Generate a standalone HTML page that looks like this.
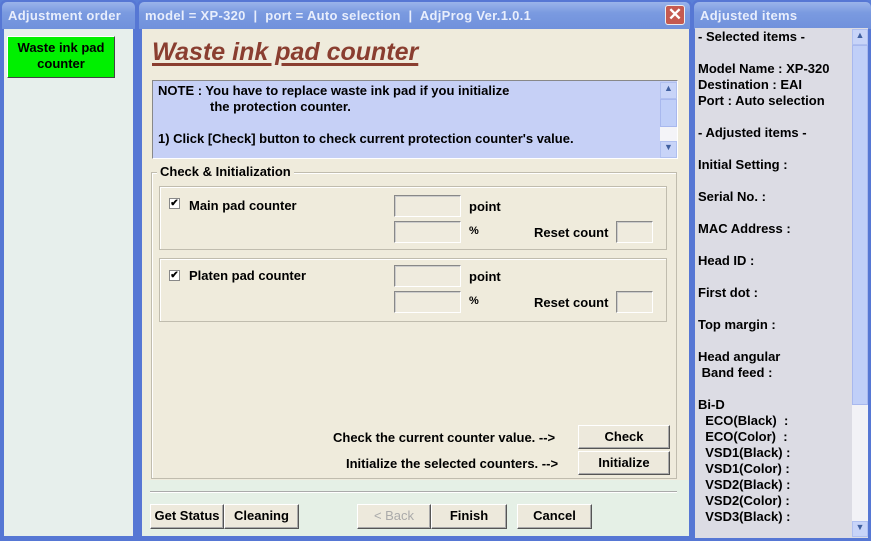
<!DOCTYPE html>
<html><head><meta charset="utf-8"><style>
*{margin:0;padding:0;box-sizing:border-box}
body{width:871px;height:541px;overflow:hidden;background:#5a7fd8;font-family:"Liberation Sans",Arial,sans-serif;font-size:13px;position:relative}
.a{position:absolute}
.tb{background:linear-gradient(#9ab4ea,#7a9ae0 40%,#7091dc);color:#e8eefc;font-weight:bold;font-size:13px;padding:6px 0 0 6px;height:28px;letter-spacing:.3px}
.b{font-weight:bold;color:#000}
.btn{position:absolute;background:#ede9dc;border:1px solid;border-color:#fff #555 #555 #fff;box-shadow:inset -1px -1px 0 #aaa;font-weight:bold;text-align:center;font-size:13px;line-height:22px}
.in{position:absolute;border:1px solid;border-color:#888 #fff #fff #888;background:#efebde;box-shadow:inset 1px 1px 0 #ccc}
.grp{position:absolute;border:1px solid #c0bcae;box-shadow:1px 1px 0 #fff inset}
.cb{position:absolute;width:11px;height:11px;border:1px solid #888;background:#fff;font-size:10px;line-height:9px;text-align:center;font-weight:bold}
</style></head><body>
<!-- left -->
<div class="a" style="left:0;top:0;width:137px;height:541px;background:#5677d4;border-radius:6px 6px 0 0"></div>
<div class="a tb" style="left:2px;top:2px;width:133px;height:27px;border-radius:5px 5px 0 0">Adjustment order</div>
<div class="a" style="left:4px;top:29px;width:129px;height:507px;background:#e7efec"></div>
<div class="a b" style="left:7px;top:36px;width:108px;height:42px;background:#00f000;border:1px solid;border-color:#fff #444 #444 #fff;text-align:center;font-size:13px;line-height:16px;padding-top:3px">Waste ink pad<br>counter</div>
<!-- middle -->
<div class="a" style="left:137px;top:0;width:555px;height:541px;background:#5677d4;border-radius:6px 6px 0 0"></div>
<div class="a tb" style="left:139px;top:2px;width:551px;height:27px;border-radius:5px 5px 0 0">model = XP-320 &nbsp;|&nbsp; port = Auto selection &nbsp;|&nbsp; AdjProg Ver.1.0.1</div>
<div class="a" style="left:665px;top:5px;width:20px;height:20px;background:#c55a50;border:1px solid #eee;border-radius:3px;color:#fff;font-size:17px;line-height:17px;text-align:center;font-weight:bold">✕</div>
<div class="a" style="left:142px;top:29px;width:547px;height:507px;background:#e5f0e6"></div>
<div class="a" style="left:142px;top:29px;width:547px;height:451px;background:#efebdc"></div>
<div class="a" style="left:152px;top:38px;font-size:25px;font-style:italic;font-weight:bold;color:#8a3e30;text-decoration:underline;text-decoration-thickness:3px;text-underline-offset:3px">Waste ink pad counter</div>
<div class="a" style="left:152px;top:80px;width:526px;height:79px;background:#c6d0f6;border:1px solid;border-color:#888 #fff #fff #888"></div>
<div class="a b" style="left:158px;top:83px;line-height:16px;font-size:13px">NOTE : You have to replace waste ink pad if you initialize<br><span style="padding-left:52px">the protection counter.</span><br><br>1) Click [Check] button to check current protection counter's value.</div>
<div class="a" style="left:660px;top:82px;width:17px;height:76px;background:#f4f4f8"></div>
<div class="a" style="left:660px;top:82px;width:17px;height:17px;background:#c8d4f8;border:1px solid #b0c0f0;font-size:9px;text-align:center;color:#4060a0">▲</div>
<div class="a" style="left:660px;top:99px;width:17px;height:28px;background:#c0cff8;border:1px solid #a8b8ee"></div>
<div class="a" style="left:660px;top:141px;width:17px;height:17px;background:#c8d4f8;border:1px solid #b0c0f0;font-size:9px;text-align:center;color:#4060a0">▼</div>
<div class="grp" style="left:151px;top:172px;width:526px;height:307px"></div>
<div class="a b" style="left:157px;top:164px;background:#efebdc;padding:0 3px">Check &amp; Initialization</div>
<div class="grp" style="left:159px;top:186px;width:508px;height:64px"></div>
<div class="cb" style="left:169px;top:198px">✔</div>
<div class="a b" style="left:189px;top:198px">Main pad counter</div>
<div class="in" style="left:394px;top:195px;width:67px;height:22px"></div>
<div class="in" style="left:394px;top:221px;width:67px;height:22px"></div>
<div class="a b" style="left:469px;top:199px">point</div>
<div class="a b" style="left:469px;top:225px;font-size:11px">%</div>
<div class="a b" style="left:534px;top:225px">Reset count</div>
<div class="in" style="left:616px;top:221px;width:37px;height:22px"></div>
<div class="grp" style="left:159px;top:258px;width:508px;height:64px"></div>
<div class="cb" style="left:169px;top:270px">✔</div>
<div class="a b" style="left:189px;top:268px">Platen pad counter</div>
<div class="in" style="left:394px;top:265px;width:67px;height:22px"></div>
<div class="in" style="left:394px;top:291px;width:67px;height:22px"></div>
<div class="a b" style="left:469px;top:269px">point</div>
<div class="a b" style="left:469px;top:295px;font-size:11px">%</div>
<div class="a b" style="left:534px;top:295px">Reset count</div>
<div class="in" style="left:616px;top:291px;width:37px;height:22px"></div>
<div class="a b" style="left:333px;top:430px">Check the current counter value. --&gt;</div>
<div class="a b" style="left:346px;top:456px">Initialize the selected counters. --&gt;</div>
<div class="btn" style="left:578px;top:425px;width:92px;height:24px">Check</div>
<div class="btn" style="left:578px;top:451px;width:92px;height:24px">Initialize</div>
<div class="a" style="left:150px;top:491px;width:527px;height:2px;border-top:1px solid #aaa;border-bottom:1px solid #fff"></div>
<div class="btn" style="left:150px;top:504px;width:74px;height:25px">Get Status</div>
<div class="btn" style="left:224px;top:504px;width:75px;height:25px">Cleaning</div>
<div class="btn" style="left:357px;top:504px;width:74px;height:25px;color:#aaa;font-weight:normal">&lt; Back</div>
<div class="btn" style="left:431px;top:504px;width:76px;height:25px">Finish</div>
<div class="btn" style="left:517px;top:504px;width:75px;height:25px">Cancel</div>
<!-- right -->
<div class="a" style="left:692px;top:0;width:179px;height:541px;background:#5677d4;border-radius:6px 6px 0 0"></div>
<div class="a tb" style="left:694px;top:2px;width:177px;height:27px;border-radius:5px 5px 0 0">Adjusted items</div>
<div class="a" style="left:695px;top:28px;width:173px;height:510px;background:#dcdce4"></div>
<div class="a b" style="left:698px;top:29px;line-height:16px;font-size:13px;white-space:pre">- Selected items -

Model Name : XP-320
Destination : EAI
Port : Auto selection

- Adjusted items -

Initial Setting :

Serial No. :

MAC Address :

Head ID :

First dot :

Top margin :

Head angular
 Band feed :

Bi-D
  ECO(Black)  :
  ECO(Color)  :
  VSD1(Black) :
  VSD1(Color) :
  VSD2(Black) :
  VSD2(Color) :
  VSD3(Black) :</div>
<div class="a" style="left:852px;top:29px;width:16px;height:508px;background:#f2f2f6"></div>
<div class="a" style="left:852px;top:29px;width:16px;height:16px;background:#c8d4f8;border:1px solid #b0c0f0;font-size:9px;text-align:center;color:#4060a0">▲</div>
<div class="a" style="left:852px;top:45px;width:16px;height:360px;background:#c0cff8;border:1px solid #a8b8ee"></div>
<div class="a" style="left:852px;top:521px;width:16px;height:16px;background:#c8d4f8;border:1px solid #b0c0f0;font-size:9px;text-align:center;color:#4060a0">▼</div>
</body></html>
